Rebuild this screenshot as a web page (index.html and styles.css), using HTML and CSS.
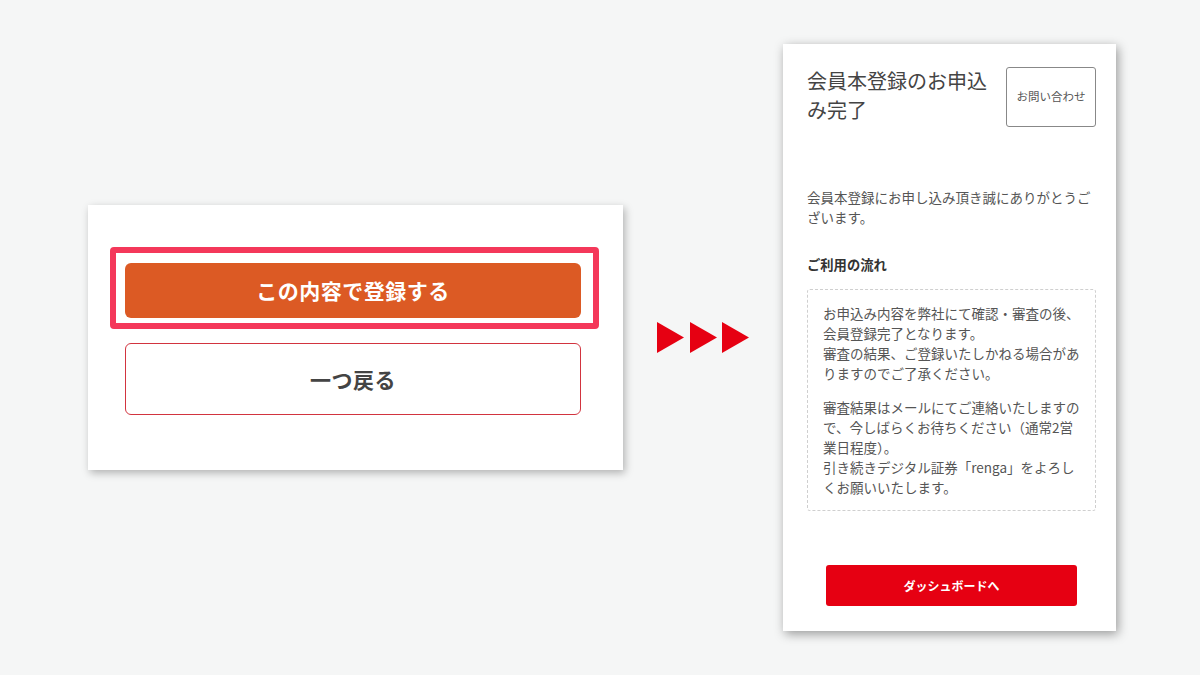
FILE: index.html
```html
<!DOCTYPE html>
<html lang="ja">
<head>
<meta charset="utf-8">
<title>会員本登録</title>
<link rel="stylesheet" href="styles.css">
</head>
<body>
<main class="stage">
  <section class="confirm-card">
    <div class="primary-wrap">
      <button class="btn-primary">この内容で登録する</button>
      <span class="highlight"></span>
    </div>
    <button class="btn-back">一つ戻る</button>
  </section>

  <div class="arrows" aria-hidden="true">
    <svg width="92" height="31" viewBox="0 0 92 31">
      <polygon points="0,0 27,15.5 0,31" fill="#e60012"/>
      <polygon points="33,0 60,15.5 33,31" fill="#e60012"/>
      <polygon points="65,0 92,15.5 65,31" fill="#e60012"/>
    </svg>
  </div>

  <section class="done-card">
    <header class="done-head">
      <h1 class="done-title">会員本登録のお申込<br>み完了</h1>
      <button class="btn-contact">お問い合わせ</button>
    </header>
    <p class="thanks">会員本登録にお申し込み頂き誠にありがとうご<br>ざいます。</p>
    <h2 class="flow-title">ご利用の流れ</h2>
    <div class="flow-box">
      <p>お申込み内容を弊社にて確認・審査の後、<br>会員登録完了となります。<br>審査の結果、ご登録いたしかねる場合があ<br>りますのでご了承ください。</p>
      <p>審査結果はメールにてご連絡いたしますの<br>で、今しばらくお待ちください（通常2営<br>業日程度）。<br>引き続きデジタル証券「renga」をよろし<br>くお願いいたします。</p>
    </div>
    <button class="btn-dashboard">ダッシュボードへ</button>
  </section>
</main>
</body>
</html>
```

FILE: styles.css
```css
* { box-sizing: border-box; }

html, body {
  margin: 0;
  padding: 0;
  width: 1200px;
  height: 675px;
  background: #f5f6f6;
  font-family: "Noto Sans CJK JP", "Noto Sans", sans-serif;
  overflow: hidden;
}

.stage {
  display: flex;
  align-items: center;
  gap: 34px;
  height: 675px;
  padding-left: 88px;
}

button {
  font-family: inherit;
  cursor: pointer;
}

/* Left card */
.confirm-card {
  width: 535px;
  height: 265px;
  background: #fff;
  padding: 58px 42px 55px 37px;
  display: flex;
  flex-direction: column;
  gap: 25px;
  box-shadow: 2px 3px 8px rgba(0, 0, 0, 0.28);
  flex-shrink: 0;
}

.primary-wrap {
  position: relative;
}

.btn-primary {
  display: block;
  width: 100%;
  height: 55px;
  border: none;
  border-radius: 6px;
  background: #dc5a24;
  color: #fff;
  font-size: 21px;
  font-weight: 700;
  letter-spacing: 0.5px;
  line-height: 1;
}

.highlight {
  position: absolute;
  top: -16px;
  left: -15px;
  right: -18px;
  bottom: -11px;
  border: 6px solid #f4385a;
  border-radius: 4px;
  pointer-events: none;
}

.btn-back {
  display: block;
  width: 100%;
  height: 72px;
  background: #fff;
  border: 1.5px solid #d2343f;
  border-radius: 6px;
  color: #444;
  font-size: 21px;
  font-weight: 700;
  letter-spacing: 0.5px;
  line-height: 1;
}

/* Arrows */
.arrows {
  display: flex;
  flex-shrink: 0;
}

.arrows svg { display: block; }

/* Right card */
.done-card {
  width: 333px;
  background: #fff;
  padding: 23px 20px 25px 24px;
  display: flex;
  flex-direction: column;
  box-shadow: 2px 3px 10px rgba(0, 0, 0, 0.38);
  flex-shrink: 0;
}

.done-head {
  display: flex;
  justify-content: space-between;
  align-items: flex-start;
  gap: 16px;
}

.done-title {
  margin: 0;
  font-size: 20px;
  font-weight: 400;
  line-height: 28.5px;
  color: #444;
  white-space: nowrap;
}

.btn-contact {
  width: 90px;
  height: 60px;
  flex-shrink: 0;
  background: #fff;
  border: 1px solid #888;
  border-radius: 3px;
  color: #555;
  font-size: 11.5px;
  padding: 0;
  line-height: 1;
}

.thanks {
  margin: 60px 0 0;
  font-size: 13.5px;
  line-height: 20px;
  color: #555;
  white-space: nowrap;
}

.flow-title {
  margin: 28px 0 0;
  font-size: 13.3px;
  font-weight: 700;
  line-height: 20px;
  color: #333;
}

.flow-box {
  margin-top: 14px;
  border: 1px dashed #cfcfcf;
  border-radius: 3px;
  padding: 13px 10px 13px 15px;
}

.flow-box p {
  margin: 0;
  font-size: 13.5px;
  line-height: 20px;
  color: #555;
  white-space: nowrap;
}

.flow-box p + p {
  margin-top: 14px;
}

.btn-dashboard {
  align-self: center;
  margin-top: 54px;
  width: 251px;
  height: 41px;
  border: none;
  border-radius: 3px;
  background: #e60012;
  color: #fff;
  font-size: 12px;
  font-weight: 700;
  line-height: 1;
  padding: 0;
}
```
